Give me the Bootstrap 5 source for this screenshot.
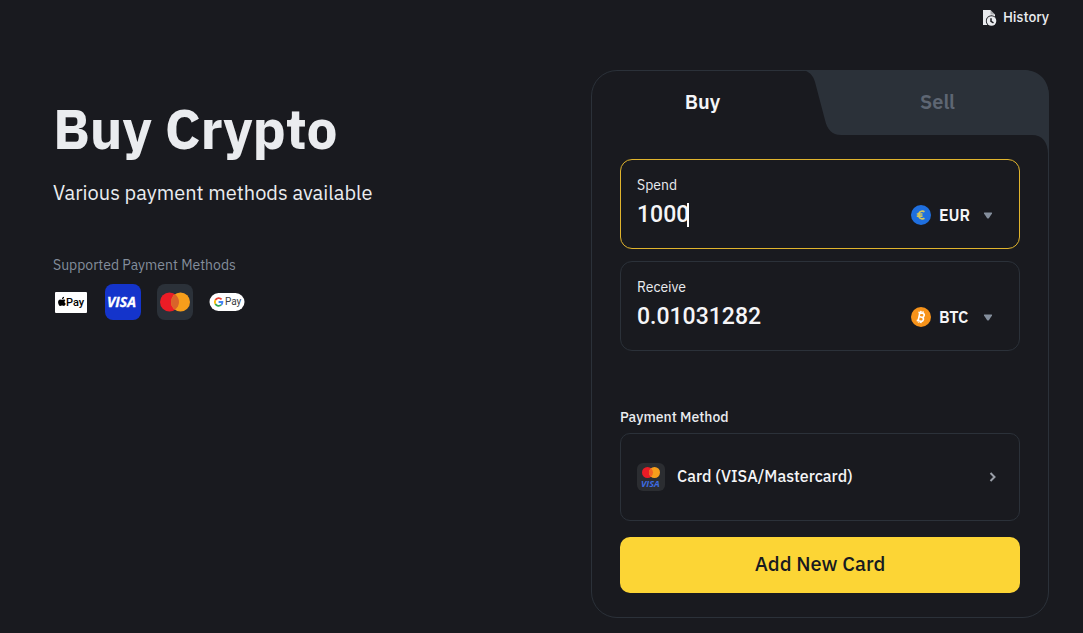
<!DOCTYPE html>
<html lang="en">
<head>
<meta charset="utf-8">
<meta name="viewport" content="width=device-width, initial-scale=1">
<title>Buy Crypto</title>
<link href="https://cdn.jsdelivr.net/npm/bootstrap@5.3.0/dist/css/bootstrap.min.css" rel="stylesheet">
<style>
  body { background: #191a1f; color: #eaecef; font-family: "IBM Plex Sans", Roboto, "Liberation Sans", sans-serif; }
  .topbar { padding: 6px 34px 0; height: 34px; }
  .history { color: #eaecef; font-size: 14px; line-height: 22px; font-weight: 500; }
  .page { padding: 36px 34px 15px 53px; }
  .hero { padding-top: 27px; }
  .hero h1 { font-size: 55px; line-height: 64px; font-weight: 700; color: #eaecef; }
  .hero .tagline { font-size: 20px; line-height: 28px; margin-top: 18px; }
  .hero .methods-title { font-size: 14px; line-height: 20px; margin-top: 48px; color: #848e9c; }
  .methods { gap: 16px; margin-top: 9px; }
  .trade { width: 458px; max-width: 100%; border: 1px solid #2b3139; border-radius: 26px; }
  .trade-tabs { height: 64px; }
  .trade-tabs button { background: none; border: 0; padding: 0 6px 2px; font-size: 20px; line-height: 28px; font-weight: 600; color: #f5f5f7; z-index: 1; }
  .trade-tabs .tab-sell { color: #5e6673; }
  .tab-gap { width: 14px; }
  .tab-shape { top: -1px; right: -1px; }
  .trade-body { padding: 24px 28px; }
  .field { height: 90px; padding: 15px 16px; border: 1px solid #2b3139; border-radius: 12px; }
  .field + .field { margin-top: 12px; }
  .field.active { border-color: #e0b42d; }
  .field label { font-size: 14px; line-height: 20px; }
  .amount { height: 40px; padding: 0; background: none; border: 0; outline: 0; color: #f5f5f7; font-family: Roboto, sans-serif; font-size: 23px; line-height: 40px; font-weight: 500; }
  .amount-spend { width: 52px; }
  .amount-receive { width: 140px; }
  .caret { width: 2px; height: 24px; margin-left: -2px; background: #fff; }
  .coin { padding-top: 30px; padding-right: 8px; }
  .coin select { appearance: none; width: 56px; height: 20px; padding: 0; background: none; border: 0; outline: 0; color: #f5f5f7; font-family: inherit; font-size: 16px; line-height: 20px; font-weight: 600; }
  .coin .coin-logo { margin-right: 8px; }
  .coin .chevron { pointer-events: none; right: 10px; bottom: 14px; }
  .pay-label { margin-top: 56px; font-size: 14px; line-height: 20px; font-weight: 500; }
  .pay-card { height: 88px; margin-top: 6px; padding: 0 21px 0 16px; background: none; color: #f5f5f7; border: 1px solid #2b3139; border-radius: 10px; font-size: 16px; font-weight: 500; }
  .pay-card span { padding-bottom: 3px; }
  .btn-add, .btn-add:hover { height: 56px; margin-top: 16px; padding: 5px 12px 7px; background: #fcd535; color: #181a20; border: 0; border-radius: 10px; font-size: 20px; line-height: 28px; font-weight: 500; }
  svg { display: block; flex: none; }
</style>
</head>
<body>
<header class="topbar d-flex justify-content-end align-items-start">
  <a href="#" class="history d-flex align-items-center gap-1 text-decoration-none">
    <svg width="18" height="18" viewBox="0 0 18 18" aria-hidden="true">
      <path fill="#eaecef" d="M2 2h7.500L14 6.500V9H9l-2.500 4L8 17H2z"/>
      <path fill="#191a1f" d="M9.500 2v4.500H14z" opacity=".3"/>
      <circle cx="10.500" cy="13" r="5.700" fill="#191a1f"/>
      <circle cx="10.500" cy="13" r="4.800" fill="#eaecef"/>
      <path d="M10 10.300v3l2.500 1.500" fill="none" stroke="#191a1f" stroke-width="1.500"/>
    </svg>
    <span>History</span>
  </a>
</header>
<main class="page d-flex flex-wrap justify-content-between align-items-start">
  <section class="hero">
    <h1 class="mb-0">Buy Crypto</h1>
    <p class="tagline mb-0">Various payment methods available</p>
    <p class="methods-title mb-0">Supported Payment Methods</p>
    <div class="methods d-flex">
      <svg width="36" height="36" viewBox="0 0 36 36" role="img" aria-label="Apple Pay">
        <rect x="2" y="8" width="32" height="21" rx="1" fill="#fff"/>
        <path d="M8.900 15.800c.8 0 1.500-.5 2.300-.3.500.1.900.3 1.200.7-1.300.9-1.100 2.900.4 3.500-.4 1.200-1.200 2.300-2 2.300-.7 0-.9-.4-1.700-.4s-1.100.4-1.700.4c-1.500 0-3.200-3.900-1.700-5.800 1.100-1.200 2.200-.4 3.200-.4zM8.900 15.300c0-1.400.9-2.400 2.200-2.600.1 1.400-.9 2.500-2.200 2.600z"/>
        <text x="13" y="22" font-family="Roboto, sans-serif" font-size="11" font-weight="500">Pay</text>
      </svg>
      <svg width="36" height="36" viewBox="0 0 36 36" role="img" aria-label="Visa">
        <rect width="36" height="36" rx="8" fill="#1434cb"/>
        <text x="2" y="23" font-family="Open Sans, sans-serif" font-size="14" font-weight="700" font-style="italic" fill="#fff" stroke="#fff" stroke-width=".3">VISA</text>
      </svg>
      <svg width="36" height="36" viewBox="0 0 36 36" role="img" aria-label="Mastercard">
        <rect width="36" height="36" rx="8" fill="#2b3139"/>
        <circle cx="12.500" cy="18" r="9.500" fill="#eb1c26"/><circle cx="23.500" cy="18" r="9.500" fill="#f79e1b"/>
        <path d="M18 10.250a9.500 9.500 0 0 1 0 15.500a9.500 9.500 0 0 1 0-15.500z" fill="#d9632a"/>
      </svg>
      <svg width="36" height="36" viewBox="0 0 36 36" role="img" aria-label="Google Pay">
        <rect x=".5" y="9" width="35" height="18" rx="9" fill="#fff"/>
        <g fill="none" stroke-width="1.800">
          <path d="M12.600 15.400A3.900 3.900 0 0 0 6.400 16" stroke="#ea4335"/><path d="M6.400 16a3.900 3.900 0 0 0 0 4" stroke="#fbbc04"/>
          <path d="M6.400 20a3.900 3.900 0 0 0 5.800.9" stroke="#34a853"/><path d="M12.200 20.900a3.900 3.900 0 0 0 1.200-2.900H9.600" stroke="#4285f4"/>
        </g>
        <text x="16" y="21" font-family="Roboto, sans-serif" font-size="10" fill="#3c4043">Pay</text>
      </svg>
    </div>
  </section>

  <section class="trade">
    <div class="trade-tabs d-flex position-relative">
      <svg class="tab-shape position-absolute" width="248" height="86" viewBox="0 0 248 86" aria-hidden="true">
        <path fill="#2b3139" d="M1 0C8 1 12 5 14 12L24 50C26 59 31 65 40 65H231C241 65 247 72 247 84H248V26C248 10 238 0 222 0Z"/>
      </svg>
      <button type="button" class="tab-buy flex-fill w-50 position-relative">Buy</button>
      <span class="tab-gap flex-shrink-0"></span>
      <button type="button" class="tab-sell flex-fill w-50 position-relative">Sell</button>
    </div>
    <div class="trade-body">
      <div class="field active d-flex justify-content-between">
        <div>
          <label for="spend" class="d-block">Spend</label>
          <div class="d-flex align-items-center">
            <input id="spend" class="amount amount-spend" type="text" inputmode="decimal" value="1000">
            <span class="caret"></span>
          </div>
        </div>
        <div class="coin position-relative d-flex align-items-start">
          <svg class="coin-logo" width="20" height="20" viewBox="0 0 20 20" aria-hidden="true">
            <circle cx="10" cy="10" r="10" fill="#1f6fdf"/>
            <path d="M13.500 6.700a4 4 0 0 0-5.500 1.500v3.600a4 4 0 0 0 5.500 1.500M5.800 9h5.700M5.800 11.200h5.700" fill="none" stroke="#d8c75a" stroke-width="1.700"/>
          </svg>
          <select aria-label="Spend currency"><option>EUR</option></select>
          <svg class="chevron position-absolute" width="10" height="7" viewBox="0 0 10 7" aria-hidden="true"><path d="M1.500 .5h7q1 0 .5 1L6 6q-1 1-2 0L1 1.500Q.5 .5 1.500 .5z" fill="#848e9c"/></svg>
        </div>
      </div>
      <div class="field d-flex justify-content-between">
        <div>
          <label for="receive" class="d-block">Receive</label>
          <input id="receive" class="amount amount-receive d-block" type="text" inputmode="decimal" value="0.01031282">
        </div>
        <div class="coin position-relative d-flex align-items-start">
          <svg class="coin-logo" width="20" height="20" viewBox="0 0 20 20" aria-hidden="true">
            <circle cx="10" cy="10" r="10" fill="#f7931a"/>
            <g transform="rotate(12 10 10)" fill="none" stroke="#fff" stroke-width="1.600"><path d="M6.500 6h4.300a2 2 0 0 1 0 4H8M10.800 10a2.100 2.100 0 0 1 0 4.200H6.500M8 6v8M8.800 4v2M11 4v2M8.800 14v2M11 14v2"/></g>
          </svg>
          <select aria-label="Receive currency"><option>BTC</option></select>
          <svg class="chevron position-absolute" width="10" height="7" viewBox="0 0 10 7" aria-hidden="true"><path d="M1.500 .5h7q1 0 .5 1L6 6q-1 1-2 0L1 1.500Q.5 .5 1.500 .5z" fill="#848e9c"/></svg>
        </div>
      </div>
      <div class="pay-label" id="pay-label">Payment Method</div>
      <button type="button" class="pay-card w-100 d-flex align-items-center text-start" aria-describedby="pay-label">
        <svg width="28" height="28" viewBox="0 0 28 28" aria-hidden="true">
          <rect width="28" height="28" rx="6" fill="#2b2d31"/>
          <circle cx="10.500" cy="9.500" r="5.500" fill="#eb1c26"/><circle cx="17.500" cy="9.500" r="5.500" fill="#f79e1b"/>
          <path d="M14 5.250a5.500 5.500 0 0 1 0 8.500a5.500 5.500 0 0 1 0-8.500z" fill="#f26122"/>
          <text x="4" y="24" font-family="Open Sans, sans-serif" font-size="9" font-weight="700" font-style="italic" fill="#3d6be0">VISA</text>
        </svg>
        <span class="flex-grow-1 ms-2 ps-1">Card (VISA/Mastercard)</span>
        <svg width="10" height="12" viewBox="0 0 10 12" aria-hidden="true"><path d="M2.500 2l4 4-4 4" fill="none" stroke="#9a9fa8" stroke-width="2"/></svg>
      </button>
      <button type="button" class="btn btn-add w-100">Add New Card</button>
    </div>
  </section>
</main>
<script src="https://cdn.jsdelivr.net/npm/bootstrap@5.3.0/dist/js/bootstrap.bundle.min.js"></script>
</body>
</html>
